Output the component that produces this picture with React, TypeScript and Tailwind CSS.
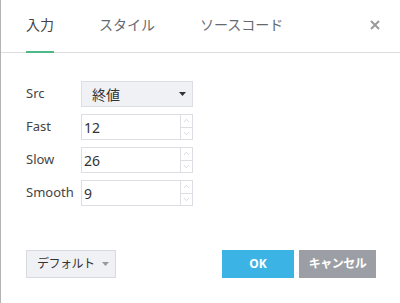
import { ChevronUp, ChevronDown } from 'lucide-react';

const font = { fontFamily: '"Noto Sans", "Noto Sans CJK JP", sans-serif' };

const tabs = ['入力', 'スタイル', 'ソースコード'];

const fields = [
  { label: 'Fast', value: '12' },
  { label: 'Slow', value: '26' },
  { label: 'Smooth', value: '9' },
];

function Caret({ className }: { className: string }) {
  return (
    <svg width="7" height="4" viewBox="0 0 7 4" className={className}>
      <path d="M0 0h7L3.5 4z" fill="currentColor" />
    </svg>
  );
}

function NumberInput({ value }: { value: string }) {
  return (
    <div className="flex h-[26px] w-[112px] border border-[#dcdee3] bg-white">
      <div className="flex flex-1 items-center pl-[2px] text-[14px] text-[#333]">{value}</div>
      <div className="flex w-[12px] flex-col border-l border-[#dcdee3]">
        <div className="flex flex-1 items-center justify-center border-b border-[#dcdee3] text-[#b5bac4]">
          <ChevronUp size={9} strokeWidth={1.5} />
        </div>
        <div className="flex flex-1 items-center justify-center text-[#b5bac4]">
          <ChevronDown size={9} strokeWidth={1.5} />
        </div>
      </div>
    </div>
  );
}

export default function App() {
  return (
    <div
      className="flex h-[303px] w-[400px] flex-col border-l border-[#b4b4b4] bg-white"
      style={font}
    >
      <div className="flex h-[53px] items-stretch border-b border-[#dddddd] pl-[25px] pr-[20px]">
        <div className="flex gap-[45px]">
          {tabs.map((t, i) => (
            <div
              key={t}
              className={`-mb-px flex items-center border-b-2 pb-[3px] text-[14px] ${
                i === 0 ? 'border-[#4fb889] text-[#444]' : 'border-transparent text-[#666a70]'
              }`}
            >
              {t}
            </div>
          ))}
        </div>
        <div className="ml-auto flex items-center pb-[3px] text-[#9a9a9a]">
          <svg width="10" height="10" viewBox="0 0 10 10">
            <path d="M1 1l8 8M9 1l-8 8" stroke="currentColor" strokeWidth="2" />
          </svg>
        </div>
      </div>

      <div className="flex flex-col gap-[7px] pl-[25px] pt-[28px]">
        <div className="flex items-center">
          <div className="w-[55px] text-[13px] text-[#444]">Src</div>
          <div className="flex h-[26px] w-[112px] items-center justify-between border border-[#dcdee3] bg-[#f0f1f5] pl-[10px] pr-[6px]">
            <span className="text-[14px] text-[#333]">終値</span>
            <Caret className="text-[#333]" />
          </div>
        </div>
        {fields.map((f) => (
          <div key={f.label} className="flex items-center">
            <div className="w-[55px] text-[13px] text-[#444]">{f.label}</div>
            <NumberInput value={f.value} />
          </div>
        ))}
      </div>

      <div className="mt-[44px] flex items-center pl-[25px] pr-[24px]">
        <div className="flex h-[28px] w-[90px] items-center gap-[7px] border border-[#d8dadf] bg-[#f0f1f5] pl-[10px] text-[12px] tracking-[-0.5px] text-[#333]">
          <span>デフォルト</span>
          <Caret className="text-[#999]" />
        </div>
        <div className="ml-auto flex gap-[5px]">
          <div className="flex h-[28px] w-[72px] items-center justify-center bg-[#3bb4e5] text-[12px] font-bold text-white">
            OK
          </div>
          <div className="flex h-[28px] w-[77px] items-center justify-center bg-[#9c9ea5] text-[12px] font-bold tracking-[-0.5px] text-white">
            キャンセル
          </div>
        </div>
      </div>
    </div>
  );
}
